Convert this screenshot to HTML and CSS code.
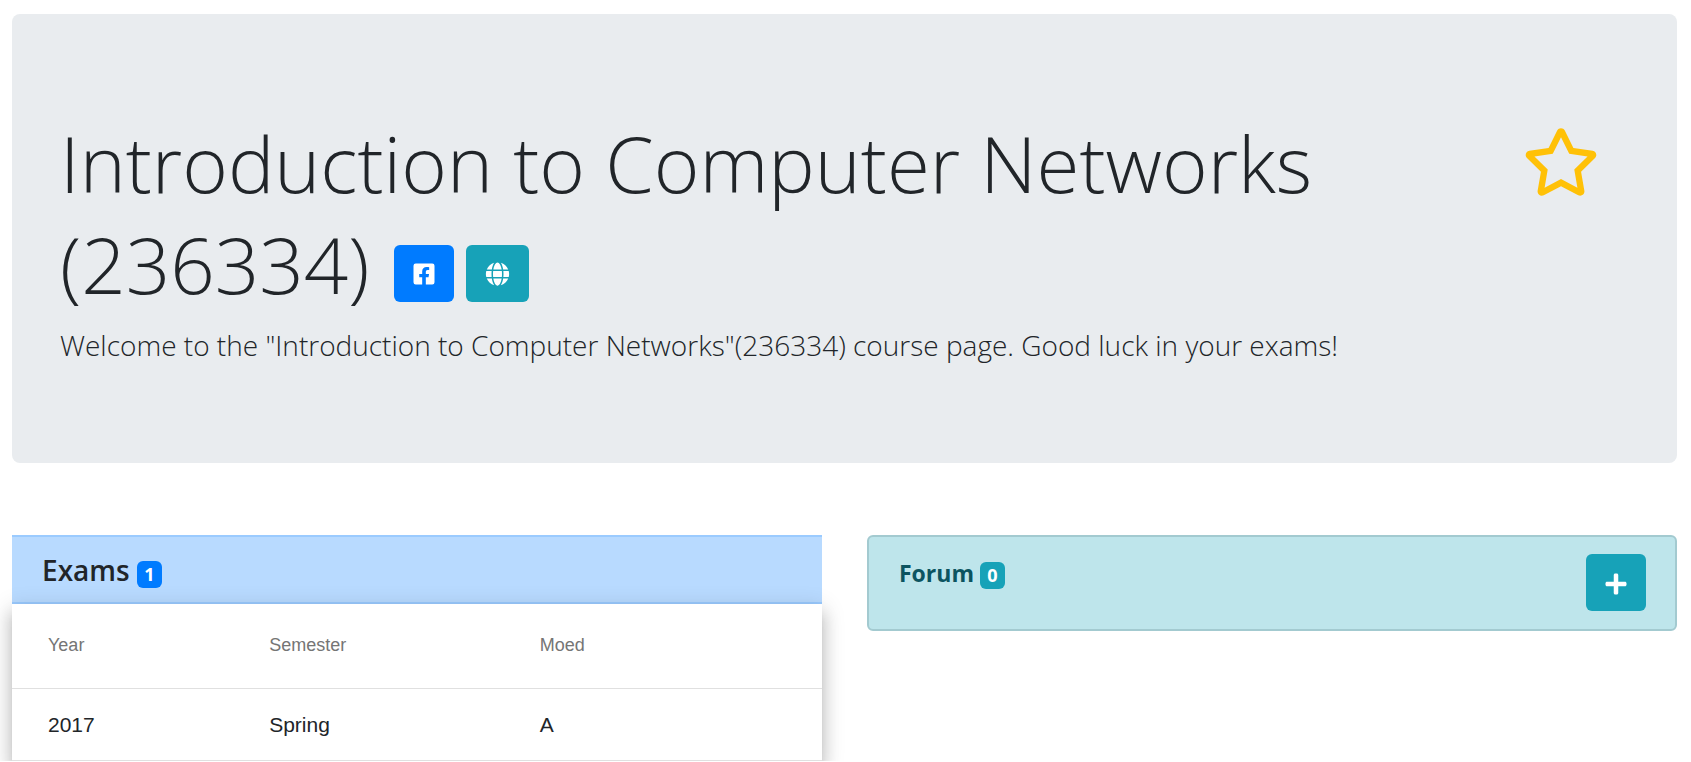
FILE: index.html
```html
<!DOCTYPE html>
<html lang="en">
<head>
<meta charset="utf-8">
<meta name="viewport" content="width=device-width, initial-scale=1">
<title>Introduction to Computer Networks (236334)</title>
<link rel="stylesheet" href="styles.css">
</head>
<body>
<main class="page">
  <header class="hero">
    <div class="hero-row">
      <h1 class="hero-title">Introduction to Computer Networks (236334)
        <span class="hero-links"><a class="btn btn-primary" href="#facebook" aria-label="Facebook group"><svg class="icon icon-fb" viewBox="0 0 448 512" aria-hidden="true"><path d="M400 32H48A48 48 0 0 0 0 80v352a48 48 0 0 0 48 48h137.250V327.690h-63V256h63v-54.640c0-62.150 37-96.480 93.670-96.480 27.140 0 55.520 4.840 55.520 4.840v61h-31.270c-30.810 0-40.420 19.120-40.420 38.730V256h68.780l-11 71.690h-57.780V480H400a48 48 0 0 0 48-48V80a48 48 0 0 0-48-48z"/></svg></a><a class="btn btn-info" href="#website" aria-label="Course website"><svg class="icon" viewBox="0 0 496 512" aria-hidden="true"><path d="M336.500 160C322 70.700 287.800 8 248 8s-74 62.700-88.500 152h177zM152 256c0 22.200 1.200 43.500 3.300 64h185.300c2.100-20.500 3.300-41.800 3.300-64s-1.200-43.500-3.300-64H155.300c-2.100 20.500-3.300 41.800-3.300 64zm324.700-96c-28.600-67.900-86.500-120.400-158-141.600 24.400 33.800 41.200 84.700 50 141.600h108zM177.200 18.400C105.800 39.600 47.800 92.100 19.300 160h108c8.700-56.900 25.500-107.800 49.900-141.600zM487.400 192H372.700c2.100 21 3.300 42.500 3.300 64s-1.200 43-3.300 64h114.600c5.500-20.500 8.600-41.800 8.600-64s-3.100-43.500-8.500-64zM120 256c0-21.500 1.200-43 3.300-64H8.600C3.200 212.500 0 233.800 0 256s3.200 43.500 8.600 64h114.600c-2-21-3.200-42.500-3.200-64zm39.500 96c14.500 89.300 48.700 152 88.500 152s74-62.700 88.500-152h-177zm159.300 141.600c71.400-21.200 129.400-73.700 158-141.600h-108c-8.800 56.900-25.600 107.800-50 141.600zM19.300 352c28.600 67.900 86.500 120.400 158 141.600-24.400-33.800-41.200-84.700-50-141.600h-108z"/></svg></a></span>
      </h1>
      <button class="star" type="button" aria-label="Add to favourites"><svg class="star-icon" viewBox="0 0 576 512" aria-hidden="true"><path d="M528.100 171.500L382 150.200 316.700 17.800c-11.700-23.600-45.600-23.900-57.400 0L194 150.200 47.900 171.500c-26.200 3.800-36.700 36.100-17.700 54.600l105.700 103-25 145.500c-4.500 26.300 23.200 46 46.400 33.700L288 439.600l130.700 68.700c23.200 12.200 50.900-7.400 46.400-33.700l-25-145.500 105.700-103c19-18.500 8.500-50.800-17.700-54.600zM388.600 312.300l23.700 138.400L288 385.400l-124.300 65.300 23.700-138.400-100.600-98 139-20.200 62.200-126 62.200 126 139 20.200-100.600 98z"/></svg></button>
    </div>
    <p class="lead">Welcome to the "Introduction to Computer Networks"(236334) course page. Good luck in your exams!</p>
  </header>

  <div class="columns">
    <section class="exams">
      <h2 class="exams-head">Exams <span class="badge badge-primary">1</span></h2>
      <div class="table-wrap">
        <table class="exam-table">
          <colgroup><col class="col-year"><col class="col-semester"><col></colgroup>
          <thead><tr><th scope="col">Year</th><th scope="col">Semester</th><th scope="col">Moed</th></tr></thead>
          <tbody><tr><td>2017</td><td>Spring</td><td>A</td></tr></tbody>
        </table>
      </div>
    </section>
    <section class="forum">
      <h2 class="forum-title">Forum <span class="badge badge-info">0</span></h2>
      <button class="btn btn-info" type="button" aria-label="Add topic"><svg class="icon icon-plus" viewBox="0 0 448 512" aria-hidden="true"><path d="M416 208H272V64c0-17.670-14.330-32-32-32h-32c-17.670 0-32 14.330-32 32v144H32c-17.670 0-32 14.330-32 32v32c0 17.670 14.330 32 32 32h144v144c0 17.670 14.330 32 32 32h32c17.670 0 32-14.330 32-32V304h144c17.670 0 32-14.330 32-32v-32c0-17.670-14.330-32-32-32z"/></svg></button>
    </section>
  </div>
</main>
</body>
</html>
```
FILE: styles.css
```css
* { box-sizing: border-box; }

body {
  margin: 0;
  overflow-x: hidden;
  background: #fff;
  color: #212529;
  font-family: "Open Sans", "Noto Sans", sans-serif;
}

.page { padding: 14px 14px 0 12px; }

.hero {
  padding: 96px 48px 95px;
  border-radius: 8px;
  background: #e9ecef;
}

.hero-row {
  display: flex;
  align-items: flex-start;
  justify-content: space-between;
}

.hero-title {
  flex: 0 1 84%;
  margin: 0 0 8px;
  padding-top: 3px;
  font-size: 78px;
  font-weight: 300;
  line-height: 101px;
}

.hero-links {
  display: inline-flex;
  gap: 12px;
  margin-left: 4px;
  vertical-align: middle;
}

.lead {
  margin: 0;
  font-size: 28px;
  font-weight: 300;
  line-height: 45px;
}

.star {
  margin: 18px 30px 0 0;
  padding: 0;
  border: 0;
  background: none;
  color: #ffc107;
  cursor: pointer;
}

.star-icon {
  display: block;
  width: 76px;
  height: 68px;
  fill: currentColor;
}

.btn {
  display: inline-flex;
  align-items: center;
  justify-content: center;
  height: 57px;
  min-width: 60px;
  padding: 2px 19px 0;
  border: 0;
  border-radius: 6px;
  color: #fff;
  cursor: pointer;
}

.btn-primary { background: #007bff; }
.btn-info { background: #17a2b8; }

.icon {
  width: 25px;
  height: 24px;
  fill: currentColor;
}

.icon-fb, .icon-plus { width: 22px; }

.columns {
  display: grid;
  grid-template-columns: 1fr 1fr;
  gap: 45px;
  align-items: start;
  margin-top: 72px;
}

.exams-head {
  margin: 0;
  padding: 15px 30px 14px;
  border-top: 2px solid #9bcbff;
  border-bottom: 2px solid #9bcbff;
  background: #b8daff;
  font-size: 28px;
  font-weight: 600;
  line-height: 36px;
}

.badge {
  display: inline-block;
  min-width: 25px;
  padding: 0 7px;
  border-radius: 6px;
  color: #fff;
  font-size: 18px;
  font-weight: 700;
  line-height: 27px;
  text-align: center;
}

.badge-primary { background: #007bff; }
.badge-info { background: #17a2b8; }

.table-wrap {
  position: relative;
  background: #fff;
  box-shadow: 0 8px 8px -5px rgba(0, 0, 0, 0.2), 0 12px 15px 2px rgba(0, 0, 0, 0.14), 0 5px 21px 3px rgba(0, 0, 0, 0.12);
}

.exam-table {
  width: 100%;
  border-collapse: separate;
  border-spacing: 0;
  table-layout: fixed;
  font-family: "Liberation Sans", Arial, sans-serif;
  text-align: left;
}

.col-year { width: 27.3%; }
.col-semester { width: 33.4%; }

.exam-table th, .exam-table td {
  padding: 0 36px;
  border-bottom: 1px solid #e0e0e0;
}

.exam-table th {
  height: 85px;
  padding-bottom: 1px;
  color: #757575;
  font-size: 18px;
  font-weight: 400;
}

.exam-table td {
  height: 72px;
  font-size: 21px;
}

.forum {
  display: flex;
  align-items: flex-start;
  justify-content: space-between;
  padding: 17px 29px 18px 30px;
  border: 2px solid #a3cad0;
  border-radius: 6px;
  background: #bee5eb;
}

.forum-title {
  margin: 1px 0 0;
  color: #0c5460;
  font-size: 23px;
  font-weight: 700;
  line-height: 36px;
}
```
